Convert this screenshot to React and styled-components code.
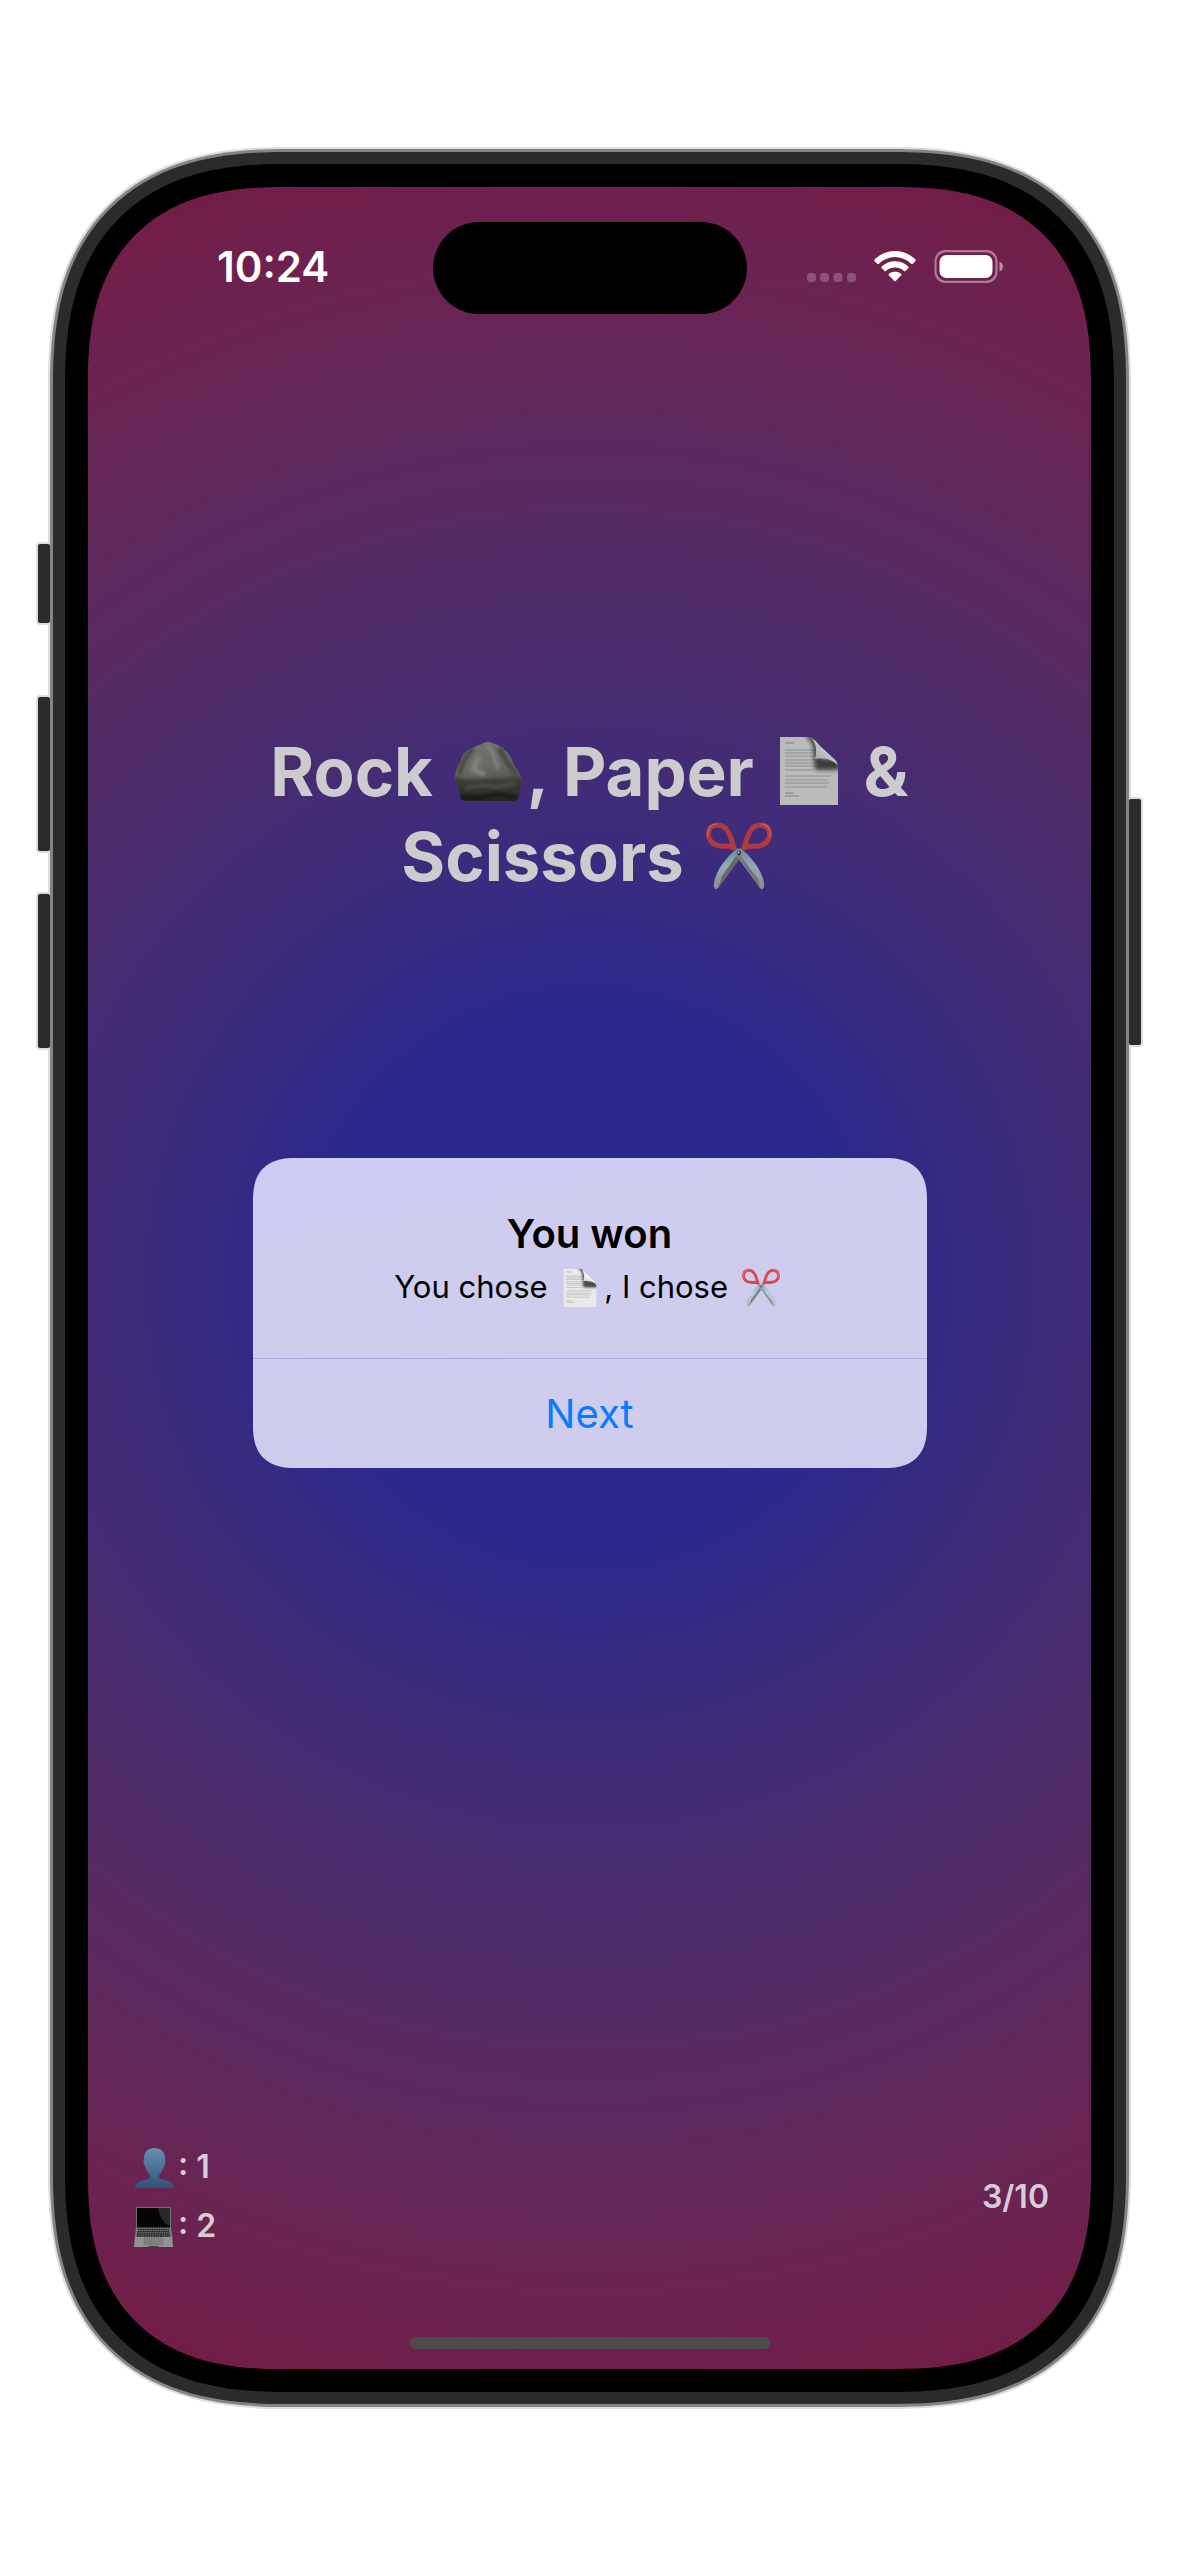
import React from "react";
import styled, { createGlobalStyle } from "styled-components";

const GlobalStyle = createGlobalStyle`
  * { box-sizing: border-box; }
  body { margin: 0; background: #fff; font-family: Inter, Roboto, "Liberation Sans", sans-serif; }
  h1, h2, p { margin: 0; }
`;

const smoothCorners = (round, smooth) => `
  border-radius: ${round}px;
  @supports (corner-shape: superellipse(1.3)) {
    border-radius: ${smooth}px;
    corner-shape: superellipse(1.3);
  }
`;

const Stage = styled.main`
  min-height: 100vh;
  display: flex;
  padding: 147px 48px;
`;

const Device = styled.div`
  position: relative;
  flex: 1;
  display: flex;
  padding: 2px;
  background: #dedede;
  ${smoothCorners(198, 238)}
`;

const Rim = styled.div`
  position: relative;
  flex: 1;
  display: flex;
  padding: 3px;
  background: #848484;
  ${smoothCorners(196, 236)}
`;

const Frame = styled.div`
  flex: 1;
  display: flex;
  border: 12px solid #2b2b2b;
  background: #000;
  padding: 23px;
  ${smoothCorners(193, 232)}
`;

const SideButton = styled.span`
  position: absolute;
  top: ${(p) => p.$top}px;
  ${(p) => p.$side}: -12px;
  width: 16px;
  height: ${(p) => p.$length}px;
  background: #2b2b2b;
  border: 2px solid #dcdcdc;
  border-radius: 4px;
`;

const Screen = styled.div`
  position: relative;
  flex: 1;
  display: flex;
  flex-direction: column;
  overflow: hidden;
  background: radial-gradient(
    circle at center,
    #28288e 0,
    #28288d 250px,
    #3a2b7e 417px,
    #482c70 593px,
    #562a62 769px,
    #652657 945px,
    #6f204d 1080px,
    #751b44 1200px
  );
  ${smoothCorners(158, 194)}
`;

const StatusBar = styled.header`
  display: flex;
  align-items: flex-start;
  justify-content: space-between;
  padding: 36px 88px 0 129px;
  height: 220px;
`;

const Clock = styled.time`
  color: #fff;
  font-size: 42px;
  font-weight: 600;
  line-height: 88px;
`;

const Island = styled.div`
  position: absolute;
  top: 35px;
  left: 50%;
  width: 314px;
  height: 92px;
  margin-left: -157px;
  border-radius: 46px;
  background: #000;
`;

const StatusIcons = styled.div`
  display: flex;
  align-items: center;
  height: 88px;
`;

const Content = styled.div`
  flex: 1;
  display: flex;
  flex-direction: column;
  align-items: center;
`;

const Title = styled.h1`
  padding-top: 322px;
  color: #cccccf;
  font-size: 67px;
  font-weight: 700;
  line-height: 85px;
  text-align: center;
`;

const TitleLine = styled.span`
  display: block;
`;

const Glyph = styled.svg`
  display: inline-block;
  width: ${(p) => p.$size}px;
  height: ${(p) => p.$size}px;
  margin: 0 4px;
  vertical-align: -10px;
  overflow: visible;
  filter: brightness(${(p) => (p.$dim ? 0.8 : 1)});
`;

const Alert = styled.section`
  position: absolute;
  top: 50%;
  left: 50%;
  width: 674px;
  transform: translate(-50%, -50%);
  margin-top: 35px;
  overflow: hidden;
  background: linear-gradient(170deg, #cdccf1, #cfcdee 50%, #cecced);
  text-align: center;
  ${smoothCorners(35, 42)}
`;

const AlertBody = styled.div`
  padding: 47px 40px 48px;
`;

const AlertTitle = styled.h2`
  color: #000;
  font-size: 40px;
  font-weight: 600;
  line-height: 58px;
`;

const AlertText = styled.p`
  color: #000;
  font-size: 31px;
  line-height: 47px;
`;

const AlertButton = styled.button`
  display: block;
  width: 100%;
  height: 110px;
  padding: 0;
  border: 0;
  border-top: 1px solid #aeace0;
  background: transparent;
  color: #0a7aff;
  font: 400 40px/110px Inter, Roboto, "Liberation Sans", sans-serif;
`;

const ScoreBar = styled.footer`
  display: flex;
  align-items: center;
  justify-content: space-between;
  padding: 0 42px 88px;
  color: #d6cbd8;
  font-size: 32px;
  font-weight: 600;
`;

const Scores = styled.div`
  display: flex;
  flex-direction: column;
  gap: 12px;
  line-height: 47px;
`;

const HomeBar = styled.div`
  align-self: center;
  width: 360px;
  height: 12px;
  margin-bottom: 20px;
  border-radius: 6px;
  background: #4c4c4c;
`;

function Rock({ size }) {
  return (
    <Glyph $size={size} viewBox="0 0 70 70" role="img" aria-label="rock">
      <defs>
        <linearGradient id="rockFace" x1="0" y1="0" x2="0.1" y2="1">
          <stop offset="0" stopColor="#73736e" /><stop offset="0.45" stopColor="#6c6c67" /><stop offset="0.7" stopColor="#565651" /><stop offset="1" stopColor="#40403c" />
        </linearGradient>
        <linearGradient id="rockBase" x1="0" y1="0" x2="0" y2="1">
          <stop offset="0" stopColor="#41413d" /><stop offset="1" stopColor="#1f1f1d" />
        </linearGradient>
        <filter id="rockSoft"><feGaussianBlur stdDeviation="1.6" /></filter>
        <clipPath id="rockOutline">
          <path d="M2 40 Q3 32 7 27 Q9 17 17 13 Q23 10 29 8 Q34 4 39 7 Q47 9 53 15 Q58 20 61 29 Q66 36 68 41 Q69 46 67 52 Q67 61 65 63 Q63 65 58 65 H12 Q8 65 7 62 L5 51 Q1 45 2 40Z" />
        </clipPath>
      </defs>
      <g clipPath="url(#rockOutline)">
        <rect width="70" height="70" fill="url(#rockFace)" />
        <g filter="url(#rockSoft)">
          <path d="M0 40 L14 44 L33 43 L52 42 L70 41 V70 H0Z" fill="url(#rockBase)" />
          <path d="M20 12 L10 26 L6 38" stroke="#484843" strokeWidth="5" fill="none" />
          <path d="M26 21 L20 34 L32 38" stroke="#83837d" strokeWidth="5" fill="none" />
          <path d="M35 9 L40 18 L45 34" stroke="#85857f" strokeWidth="3" fill="none" />
          <path d="M46 12 L54 26 L64 40" stroke="#4c4c47" strokeWidth="6" fill="none" />
          <path d="M12 52 L30 49 L44 51 L62 48" stroke="#4b4b46" strokeWidth="4" fill="none" />
          <path d="M8 61 L27 62 L45 58 L64 61" stroke="#191918" strokeWidth="4" fill="none" />
        </g>
      </g>
    </Glyph>
  );
}

function Paper({ size, dim }) {
  const id = dim ? "dim" : "lit";
  return (
    <Glyph $size={size} $dim={dim} viewBox="0 0 70 70" role="img" aria-label="paper">
      <defs>
        <linearGradient id={`curl-${id}`} x1="0.25" y1="0.75" x2="0.8" y2="0.2">
          <stop offset="0" stopColor="#d9d9d9" /><stop offset="0.6" stopColor="#fafafa" /><stop offset="1" stopColor="#999" />
        </linearGradient>
        <filter id={`shade-${id}`} x="-30%" y="-30%" width="160%" height="160%"><feGaussianBlur stdDeviation="2.2" /></filter>
        <clipPath id={`sheet-${id}`}><path d="M6 1 H34 C40 1 42 6 47 11 L58 21 C62 24 64 26 64 31 V69 H6 Z" /></clipPath>
      </defs>
      <g clipPath={`url(#sheet-${id})`}>
        <path d="M6 1H64V69H6Z" fill="#eaeaea" />
        <path d="M11 7h9M11 57h9M11 60h14" stroke="#a0a0a0" strokeWidth="1" />
        <path d="M11 14h30M11 17h30M11 20h31M11 24h31M11 27h31M11 30h32M11 34h28M11 40h46M11 44h43M11 47h44M11 51h42" stroke="#b4b4b4" strokeWidth="1.2" />
        <path d="M31 -2 L39 9 L41 34 L66 34 V24 L46 22 L43 0Z" fill="#222" opacity=".8" filter={`url(#shade-${id})`} />
        <path d="M35 1 C43 5 43 16 41 23 C50 21 59 23 64 30 L62 25 L42 5 Z" fill={`url(#curl-${id})`} />
      </g>
    </Glyph>
  );
}

function Scissors({ size, dim }) {
  const id = dim ? "dim" : "lit";
  return (
    <Glyph $size={size} $dim={dim} viewBox="0 0 70 70" role="img" aria-label="scissors">
      <defs>
        <linearGradient id={`blade-${id}`} x1="0" y1="0" x2="0" y2="1">
          <stop offset="0" stopColor="#8eabc0" /><stop offset="0.45" stopColor="#b4d4e6" /><stop offset="1" stopColor="#b0adae" />
        </linearGradient>
      </defs>
      <path d="M34 27 C23 35 12 49 10 62 C9 67 12 70 14 67 L38 34 Z" fill={`url(#blade-${id})`} />
      <path d="M14 67 L38 35 L35 31 L18 55Z" fill="#85827f" />
      <path d="M36 27 C47 35 58 49 60 62 C61 67 58 70 56 67 L32 34 Z" fill={`url(#blade-${id})`} />
      <path d="M56 67 L33 34 L36 34 L54 58Z" fill="#92908e" />
      <g fill="none" stroke="#dd464d" strokeWidth="5" strokeLinejoin="round">
        <path d="M30 27 C27 17 24 4 14 4 C6 4 3 10 5 17 C8 25 17 26 25 25 L30 27Z" />
        <path d="M40 27 C43 17 46 4 56 4 C64 4 67 10 65 17 C62 25 53 26 45 25 L40 27Z" />
      </g>
      <path d="M13 3 C6 3 3 9 4 16 M57 3 C64 3 67 9 66 16" fill="none" stroke="#f58084" strokeWidth="1.2" />
      <circle cx="35" cy="32" r="2.4" fill="#555c62" /><circle cx="34.5" cy="31.5" r="1" fill="#d5dce0" />
    </Glyph>
  );
}

function Person({ size }) {
  return (
    <Glyph $size={size} viewBox="0 0 40 40" role="img" aria-label="player">
      <defs>
        <linearGradient id="person" x1="0" y1="0" x2="0" y2="1">
          <stop offset="0" stopColor="#6690af" /><stop offset="1" stopColor="#2f5375" />
        </linearGradient>
      </defs>
      <path d="M20.500 0 C27 0 31 4 31 10 C31 12 32 13 31 16 C30 18 30 18 29 21 C28 24 25 26 25 28 C25 32 29 31 34 33 C39 35 40 37 40 40 H1 C1 37 2 35 7 33 C12 31 16 32 16 28 C16 26 13 24 12 21 C11 18 11 18 10 16 C9 13 10 12 10 10 C10 4 14 0 20.500 0Z" fill="url(#person)" />
    </Glyph>
  );
}

function Laptop({ size }) {
  return (
    <Glyph $size={size} viewBox="0 0 40 40" role="img" aria-label="computer">
      <path d="M2.500 .5 H36.500 V21 H2.500Z" fill="#050505" stroke="#6f6f6f" strokeWidth="1" />
      <path d="M24 1 H36 V19 C29 16 26 10 24 1Z" fill="#292929" />
      <path d="M2 21 H37 L38.500 30 H.8Z" fill="#77777a" />
      <path d="M4 22.500H35M3.500 24.800H35.500M3 27H36M3 29H36" stroke="#1d1d1f" strokeWidth="1.500" strokeDasharray="1.800 .5" />
      <path d="M.8 30 H38.300 L39 40 H0Z" fill="#929294" />
      <path d="M10.500 30.500 H28.500 L29.500 38 H9.500Z" fill="#7f7f81" stroke="#777" strokeWidth=".5" />
      <path d="M14 40 H25 L24 39 H15Z" fill="#444" />
    </Glyph>
  );
}

function StatusGlyphs() {
  return (
    <svg width="196" height="34" viewBox="0 0 196 34" role="img" aria-label="Wi-Fi connected, battery full">
      <g fill="#fff" opacity=".22">
        <rect x="0" y="23" width="9" height="9" rx="3.500" /><rect x="13" y="23" width="9" height="9" rx="3.500" />
        <rect x="26.500" y="23" width="9" height="9" rx="3.500" /><rect x="40" y="23" width="9" height="9" rx="3.500" />
      </g>
      <g fill="#fff">
        <path d="M67.500 11 Q66.800 10.200 67.600 9.500 C79 -1.800 97 -1.800 108.400 9.500 Q109.200 10.200 108.500 11 L105.800 13.700 Q105 14.400 104.200 13.700 C94.500 4.900 81.500 4.900 71.800 13.700 Q71 14.400 70.200 13.700 Z" />
        <path d="M74.600 18 Q73.900 17.200 74.700 16.500 C82 9.500 94 9.500 101.300 16.500 Q102.100 17.200 101.400 18 L98.500 20.900 Q97.800 21.600 97 20.900 C91.500 16.500 84.500 16.500 79 20.900 Q78.200 21.600 77.500 20.900Z" />
        <path d="M81.800 25.300 Q81.100 24.500 82 23.800 C85.500 21.200 90.500 21.200 94 23.800 Q94.900 24.500 94.200 25.300 L88.700 31.100 Q88 31.800 87.300 31.100Z" />
      </g>
      <rect x="128.500" y="1.200" width="61" height="30.600" rx="10" fill="none" stroke="#fff" strokeOpacity=".42" strokeWidth="2.200" />
      <rect x="132.500" y="5" width="53" height="23" rx="7" fill="#fff" />
      <path d="M192.500 11.500 Q196 13 196 16.500 Q196 20 192.500 21.500Z" fill="#fff" opacity=".5" />
    </svg>
  );
}

export default function App() {
  return (
    <Stage>
      <GlobalStyle />
      <Device>
        <SideButton $side="left" $top={395} $length={83} />
        <SideButton $side="left" $top={548} $length={158} />
        <SideButton $side="left" $top={745} $length={158} />
        <SideButton $side="right" $top={650} $length={250} />
        <Rim>
          <Frame>
            <Screen>
              <StatusBar>
                <Clock>10:24</Clock>
                <StatusIcons><StatusGlyphs /></StatusIcons>
              </StatusBar>
              <Island />
              <Content>
                <Title>
                  <TitleLine>Rock <Rock size={70} />, Paper <Paper size={70} dim /> &amp;</TitleLine>
                  <TitleLine>Scissors <Scissors size={70} dim /></TitleLine>
                </Title>
              </Content>
              <ScoreBar>
                <Scores>
                  <div><Person size={40} />: 1</div>
                  <div><Laptop size={40} />: 2</div>
                </Scores>
                <div>3/10</div>
              </ScoreBar>
              <HomeBar />
              <Alert role="alertdialog" aria-labelledby="result" aria-describedby="choices">
                <AlertBody>
                  <AlertTitle id="result">You won</AlertTitle>
                  <AlertText id="choices">
                    You chose <Paper size={40} />, I chose <Scissors size={40} />
                  </AlertText>
                </AlertBody>
                <AlertButton type="button">Next</AlertButton>
              </Alert>
            </Screen>
          </Frame>
        </Rim>
      </Device>
    </Stage>
  );
}
